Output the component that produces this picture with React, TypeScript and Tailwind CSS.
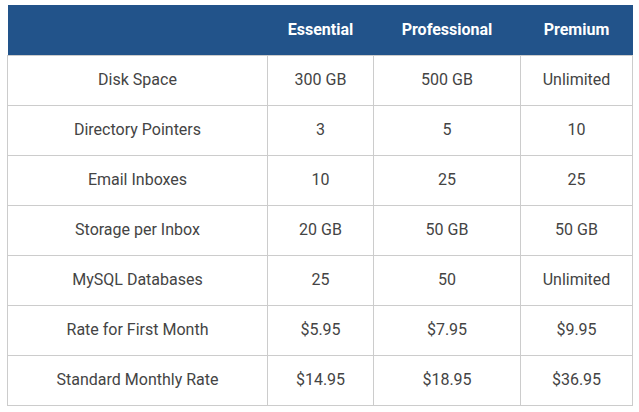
const plans = ["Essential", "Professional", "Premium"];

const rows: [string, string, string, string][] = [
  ["Disk Space", "300 GB", "500 GB", "Unlimited"],
  ["Directory Pointers", "3", "5", "10"],
  ["Email Inboxes", "10", "25", "25"],
  ["Storage per Inbox", "20 GB", "50 GB", "50 GB"],
  ["MySQL Databases", "25", "50", "Unlimited"],
  ["Rate for First Month", "$5.95", "$7.95", "$9.95"],
  ["Standard Monthly Rate", "$14.95", "$18.95", "$36.95"],
];

const widths = ["w-[260px]", "w-[106px]", "w-[147px]", "w-[112px]"];

export default function App() {
  return (
    <div className="w-[639px] h-[412px] bg-white pt-[5px] pl-[7px] font-['Roboto',sans-serif]">
      <table className="w-[625px] border-collapse table-fixed text-[16px] text-[#444]">
        <thead>
          <tr className="bg-[#22538a] h-[50px]">
            <th className={widths[0]}></th>
            {plans.map((p, i) => (
              <th key={p} className={`${widths[i + 1]} font-bold text-white text-center`}>
                {p}
              </th>
            ))}
          </tr>
        </thead>
        <tbody>
          {rows.map((r) => (
            <tr key={r[0]} className="h-[50px]">
              {r.map((c, i) => (
                <td key={i} className="border border-[#cccccc] text-center">
                  {c}
                </td>
              ))}
            </tr>
          ))}
        </tbody>
      </table>
    </div>
  );
}
